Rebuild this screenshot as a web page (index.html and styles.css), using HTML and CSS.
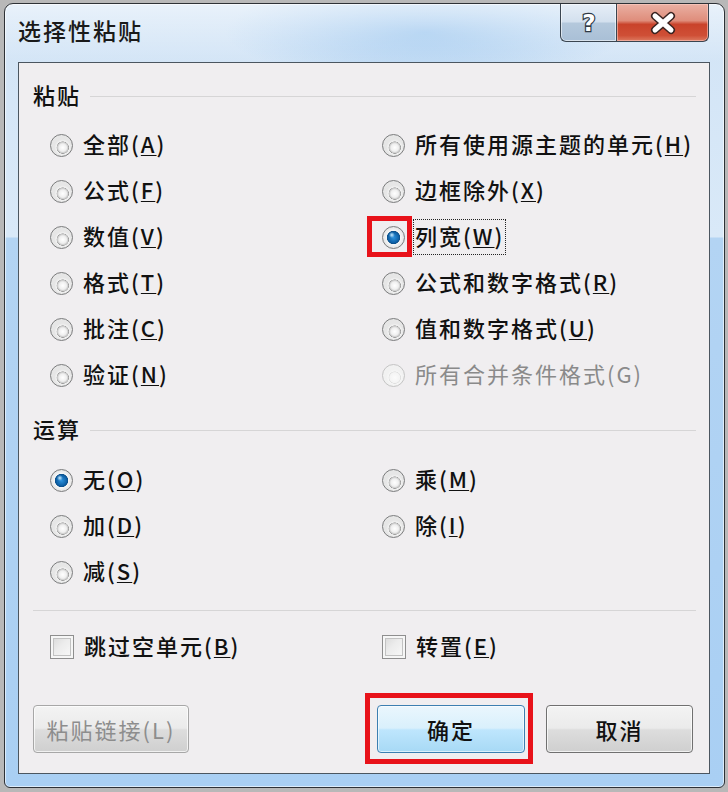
FILE: index.html
```html
<!DOCTYPE html>
<html lang="zh-CN">
<head>
  <meta charset="UTF-8">
  <title>选择性粘贴</title>
  <link rel="stylesheet" href="styles.css">
</head>
<body>
  <div class="window">
    <div class="titlebar">
      <span class="title">选择性粘贴</span>
      <div class="caption-buttons">
        <div class="cap-btn help">
          <svg width="22" height="28" viewBox="0 0 22 28"><text x="11" y="22" text-anchor="middle" font-family="DejaVu Sans" font-weight="bold" font-size="23" fill="#fff" stroke="#2e3945" stroke-width="2.4" paint-order="stroke">?</text></svg>
        </div>
        <div class="cap-btn close">
          <svg width="28" height="24" viewBox="0 0 28 24">
            <path d="M6 5 L22 19 M22 5 L6 19" stroke="#3a2320" stroke-width="8" stroke-linecap="round"/>
            <path d="M6 5 L22 19 M22 5 L6 19" stroke="#fff" stroke-width="5" stroke-linecap="round"/>
          </svg>
        </div>
      </div>
    </div>

    <div class="client">
      <div class="group-title"><span class="txt">粘贴</span><div class="rule"></div></div>
      <div class="options paste">
        <label class="opt"><span class="radio"></span><span class="txt">全部(<u>A</u>)</span></label>
        <label class="opt"><span class="radio"></span><span class="txt">所有使用源主题的单元(<u>H</u>)</span></label>
        <label class="opt"><span class="radio"></span><span class="txt">公式(<u>F</u>)</span></label>
        <label class="opt"><span class="radio"></span><span class="txt">边框除外(<u>X</u>)</span></label>
        <label class="opt"><span class="radio"></span><span class="txt">数值(<u>V</u>)</span></label>
        <label class="opt focused"><span class="radio checked marked"></span><span class="focus"><span class="txt">列宽(<u>W</u>)</span></span></label>
        <label class="opt"><span class="radio"></span><span class="txt">格式(<u>T</u>)</span></label>
        <label class="opt"><span class="radio"></span><span class="txt">公式和数字格式(<u>R</u>)</span></label>
        <label class="opt"><span class="radio"></span><span class="txt">批注(<u>C</u>)</span></label>
        <label class="opt"><span class="radio"></span><span class="txt">值和数字格式(<u>U</u>)</span></label>
        <label class="opt"><span class="radio"></span><span class="txt">验证(<u>N</u>)</span></label>
        <label class="opt disabled"><span class="radio"></span><span class="txt">所有合并条件格式(G)</span></label>
      </div>

      <div class="group-title calc"><span class="txt">运算</span><div class="rule"></div></div>
      <div class="options calc-opts">
        <label class="opt"><span class="radio checked"></span><span class="txt">无(<u>O</u>)</span></label>
        <label class="opt"><span class="radio"></span><span class="txt">乘(<u>M</u>)</span></label>
        <label class="opt"><span class="radio"></span><span class="txt">加(<u>D</u>)</span></label>
        <label class="opt"><span class="radio"></span><span class="txt">除(<u>I</u>)</span></label>
        <label class="opt"><span class="radio"></span><span class="txt">减(<u>S</u>)</span></label>
      </div>

      <div class="separator"></div>

      <div class="options checks">
        <label class="opt"><span class="check"></span><span class="txt">跳过空单元(<u>B</u>)</span></label>
        <label class="opt"><span class="check"></span><span class="txt">转置(<u>E</u>)</span></label>
      </div>

      <div class="buttons">
        <button class="btn link" disabled><span class="txt">粘贴链接(L)</span></button>
        <button class="btn ok marked"><span class="txt">确定</span></button>
        <button class="btn cancel"><span class="txt">取消</span></button>
      </div>
    </div>
  </div>
</body>
</html>
```

FILE: styles.css
```css
html, body {
  margin: 0;
  padding: 0;
}
body {
  background: #b8b8b8;
  font-family: "Noto Sans CJK SC", "Noto Sans", sans-serif;
  font-weight: 500;
  color: #111;
}
.window {
  box-sizing: border-box;
  width: 721px;
  height: 785px;
  margin: 3px 0 0 4px;
  padding: 0 14px 13px 13px;
  border: 1px solid #2d3136;
  border-radius: 9px 9px 6px 6px;
  display: flex;
  flex-direction: column;
  background:
    linear-gradient(to bottom, rgba(255, 255, 255, 0.5), rgba(255, 255, 255, 0) 58px),
    radial-gradient(ellipse 200px 50px at 420px 28px, rgba(150, 195, 238, 0.8), rgba(150, 195, 238, 0)),
    linear-gradient(to bottom, #d2e4f6 0, #d9e9f8 233px, #b3d4f3 234px, #a9cff3 100%);
  box-shadow: inset 0 0 0 1px rgba(255, 255, 255, 0.6);
}
.titlebar {
  height: 58px;
  flex: none;
  display: flex;
  align-items: flex-start;
}
.title {
  font-size: 23px;
  letter-spacing: 2px;
  line-height: 28px;
  padding-top: 12px;
  color: #1a1a1a;
}
.caption-buttons {
  margin-left: auto;
  margin-right: 1px;
  display: flex;
}
.cap-btn {
  box-sizing: border-box;
  height: 38px;
  display: flex;
  align-items: center;
  justify-content: center;
  border: 1px solid #3a4550;
  border-top: none;
}
.help {
  width: 56px;
  border-radius: 0 0 0 6px;
  border-right: none;
  background: linear-gradient(to bottom, #e6eef7 0, #d3e0ee 48%, #b4c8dc 52%, #a9bfd6 100%);
  box-shadow: inset 0 0 0 1px rgba(255, 255, 255, 0.55);
}
.close {
  width: 93px;
  border-radius: 0 0 6px 0;
  background: linear-gradient(to bottom, #eab0a3 0, #df8d7b 45%, #c9432b 55%, #cf4f36 85%, #dc7a60 100%);
  box-shadow: inset 0 0 0 1px rgba(255, 210, 200, 0.55);
}
.client {
  flex: 1;
  box-sizing: border-box;
  border: 1px solid #4b5660;
  background: #f0eef0;
  padding: 19px 13px 0 14px;
  display: flex;
  flex-direction: column;
}
.txt {
  padding-bottom: 4px;
}
.group-title {
  height: 28px;
  display: flex;
  align-items: center;
  gap: 9px;
  font-size: 22px;
  letter-spacing: 2px;
}
.group-title.calc {
  margin-top: 18px;
}
.rule {
  flex: 1;
  border-top: 1px solid #d6d5d6;
}
.options {
  display: grid;
  grid-template-columns: 332px 1fr;
  grid-auto-rows: 46px;
  margin-left: 17px;
  font-size: 22px;
  letter-spacing: 2px;
}
.options.paste {
  margin-top: 12px;
}
.options.calc-opts {
  margin-top: 13px;
}
.opt {
  display: flex;
  align-items: center;
  gap: 10px;
}
.opt u {
  text-decoration-thickness: 1px;
  text-underline-offset: 2px;
}
.opt.disabled {
  color: #8a8a8a;
  font-weight: 400;
}
.radio {
  position: relative;
  box-sizing: border-box;
  width: 23px;
  height: 23px;
  flex: none;
  border-radius: 50%;
  border: 1px solid #7b7c7d;
  background: radial-gradient(circle closest-side at 56% 60%, #ffffff 0, #efefef 45%, #c4c4c4 66%, #9a9a9a 70%, #f2f2f2 76%, #e6e6e6 100%);
}
.disabled .radio {
  border-color: #c4c4c4;
  background: radial-gradient(circle closest-side at 56% 60%, #fbfbfb 0, #f4f4f4 60%, #dedede 70%, #f6f6f6 76%, #f1f1f1 100%);
}
.radio.checked {
  background:
    radial-gradient(circle 3px at 42% 38%, #c9ecff, rgba(201, 236, 255, 0)),
    radial-gradient(circle closest-side, #2d92dd 0, #0d60a6 50%, #0a4d88 60%, #f6f6f6 66%, #e4e4e4 100%);
}
.radio.marked::after {
  content: "";
  position: absolute;
  left: -16px;
  top: -11px;
  right: -8px;
  bottom: -9px;
  border: 5px solid #e8121a;
}
.opt.focused {
  gap: 8px;
}
.focus {
  height: 36px;
  box-sizing: border-box;
  display: flex;
  align-items: center;
  padding: 0 1px;
  border: 1px dotted #222;
}
.separator {
  margin-top: 15px;
  border-top: 1px solid #d6d5d6;
}
.options.checks {
  margin-top: 13px;
}
.check {
  box-sizing: border-box;
  width: 24px;
  height: 24px;
  flex: none;
  border: 1px solid #8e8e8e;
  background: linear-gradient(135deg, #d6d6d6 0, #ececec 45%, #fafafa 100%);
  box-shadow: inset 0 0 0 2px #f6f6f6, inset 0 0 0 3px #c2c2c2;
}
.buttons {
  margin-top: 35px;
  display: flex;
  gap: 21px;
  padding-right: 3px;
}
.btn {
  position: relative;
  box-sizing: border-box;
  width: 147px;
  height: 48px;
  font-family: "Noto Sans CJK SC", "Noto Sans", sans-serif;
  font-weight: 500;
  font-size: 22px;
  letter-spacing: 2px;
  color: #111;
  border: 1px solid #707070;
  border-radius: 4px;
  background: linear-gradient(to bottom, #f3f3f3 0, #ebebeb 48%, #dddddd 52%, #cfcfcf 100%);
  box-shadow: inset 0 0 0 1px rgba(255, 255, 255, 0.7);
  padding: 0;
}
.btn.link {
  width: 156px;
  margin-right: auto;
  color: #8d8d8d;
  font-weight: 400;
  border-color: #a7a7a7;
}
.btn.ok {
  width: 148px;
  border-color: #3c7fb1;
  background: linear-gradient(to bottom, #eaf6fd 0, #d9f0fc 48%, #bee6fd 52%, #a7d9f5 100%);
  box-shadow: inset 0 0 0 1px rgba(255, 255, 255, 0.6);
}
.btn.marked::after {
  content: "";
  position: absolute;
  left: -13px;
  top: -13px;
  right: -9px;
  bottom: -12px;
  border: 5px solid #e8121a;
}
```
